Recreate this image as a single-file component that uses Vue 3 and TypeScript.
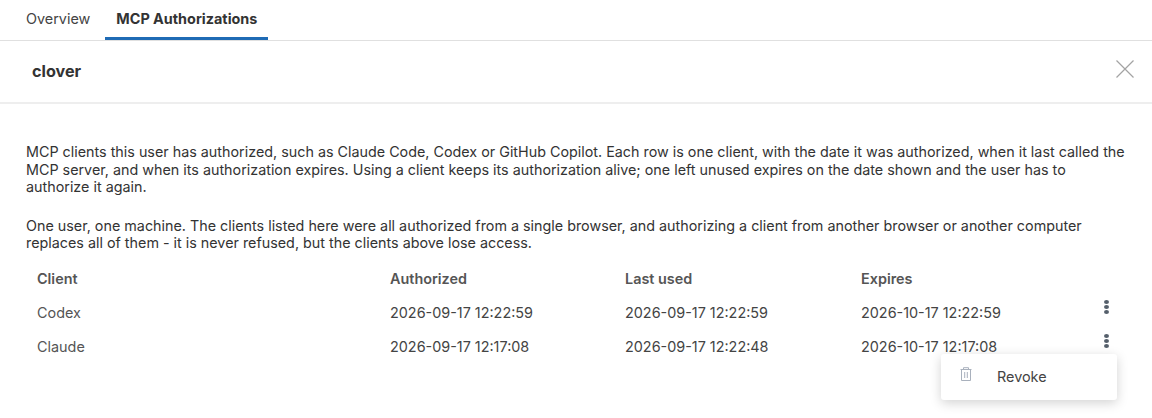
<script setup lang="ts">
interface Row { client: string; authorized: string; lastUsed: string; expires: string }
const rows: Row[] = [
  { client: 'Codex', authorized: '2026-09-17 12:22:59', lastUsed: '2026-09-17 12:22:59', expires: '2026-10-17 12:22:59' },
  { client: 'Claude', authorized: '2026-09-17 12:17:08', lastUsed: '2026-09-17 12:22:48', expires: '2026-10-17 12:17:08' },
]
</script>

<template>
  <div class="page">
    <nav class="tabs">
      <a class="tab">Overview</a>
      <a class="tab active">MCP Authorizations</a>
    </nav>
    <header class="head">
      <h2>clover</h2>
      <svg class="close" width="18" height="18" viewBox="0 0 18 18" fill="none" stroke="#a3a3a3" stroke-width="1.2">
        <path d="M.5.5 17.5 17.5M17.5.5 .5 17.5" />
      </svg>
    </header>
    <section class="body">
      <p>MCP clients this user has authorized, such as Claude Code, Codex or GitHub Copilot. Each row is one client, with the date it was authorized, when it last called the MCP server, and when its authorization expires. Using a client keeps its authorization alive; one left unused expires on the date shown and the user has to authorize it again.</p>
      <p>One user, one machine. The clients listed here were all authorized from a single browser, and authorizing a client from another browser or another computer replaces all of them - it is never refused, but the clients above lose access.</p>
      <div class="table">
        <div class="row header">
          <span>Client</span><span>Authorized</span><span>Last used</span><span>Expires</span><span></span>
        </div>
        <div v-for="r in rows" :key="r.client" class="row">
          <span class="client">{{ r.client }}</span>
          <span>{{ r.authorized }}</span>
          <span>{{ r.lastUsed }}</span>
          <span>{{ r.expires }}</span>
          <span class="kebab"><i></i><i></i><i></i></span>
        </div>
        <div class="menu">
          <svg width="12" height="14" viewBox="0 0 12 14" fill="none" stroke="#a9b1bd" stroke-width="1">
            <path d="M.5 2.5h11M3.5 2.5V.7h5v1.8M1.5 2.5v11h9v-11M4.7 5v6M7.3 5v6" />
          </svg>
          <span>Revoke</span>
        </div>
      </div>
    </section>
  </div>
</template>

<style scoped>
.page {
  width: 1152px;
  height: 418px;
  overflow: hidden;
  background: #fff;
  font-family: Inter, "Liberation Sans", sans-serif;
  font-size: 14.4px;
  color: #333;
}
.tabs {
  display: flex;
  height: 40px;
  padding-left: 11px;
  border-bottom: 1px solid #e0e0e0;
}
.tab {
  height: 40px;
  box-sizing: border-box;
  padding: 0 15px;
  line-height: 38px;
  color: #444;
}
.tab.active {
  padding: 0 11px;
  font-weight: 700;
  color: #333;
  border-bottom: 3px solid #1f6bb5;
}
.head {
  display: flex;
  align-items: center;
  justify-content: space-between;
  height: 61px;
  padding: 0 18.5px 0 32px;
  border-bottom: 2px solid #eee;
}
.head h2 {
  margin: 0 0 2px;
  font-size: 16.2px;
  font-weight: 700;
  color: #333;
}
.close { display: block; margin-bottom: 5px; }
.body { padding: 39px 25px 0 26px; }
.body p {
  margin: 0 0 21px;
  font-size: 14.34px;
  line-height: 17.5px;
  color: #333;
}
.table { position: relative; margin-top: -11px; }
.row {
  display: grid;
  grid-template-columns: 353px 235px 236px 235px 1fr;
  height: 34px;
  align-items: center;
  padding-left: 11px;
  color: #444;
}
.row.header { font-weight: 600; color: #555; }
.client { color: #555; }
.kebab {
  display: flex;
  flex-direction: column;
  gap: 1px;
  width: 5px;
  margin-left: 8px;
  margin-top: -11px;
}
.kebab i {
  display: block;
  width: 5px;
  height: 4px;
  border-radius: 50%;
  background: #555f6b;
}
.menu {
  position: absolute;
  left: 915px;
  top: 92px;
  width: 176px;
  height: 46px;
  display: flex;
  align-items: center;
  gap: 25px;
  padding-left: 19px;
  box-sizing: border-box;
  background: #fff;
  border-radius: 3px;
  box-shadow: 0 3px 12px rgba(0, 0, 0, 0.18);
  color: #444;
}
.menu svg { margin-top: -6px; }
</style>
